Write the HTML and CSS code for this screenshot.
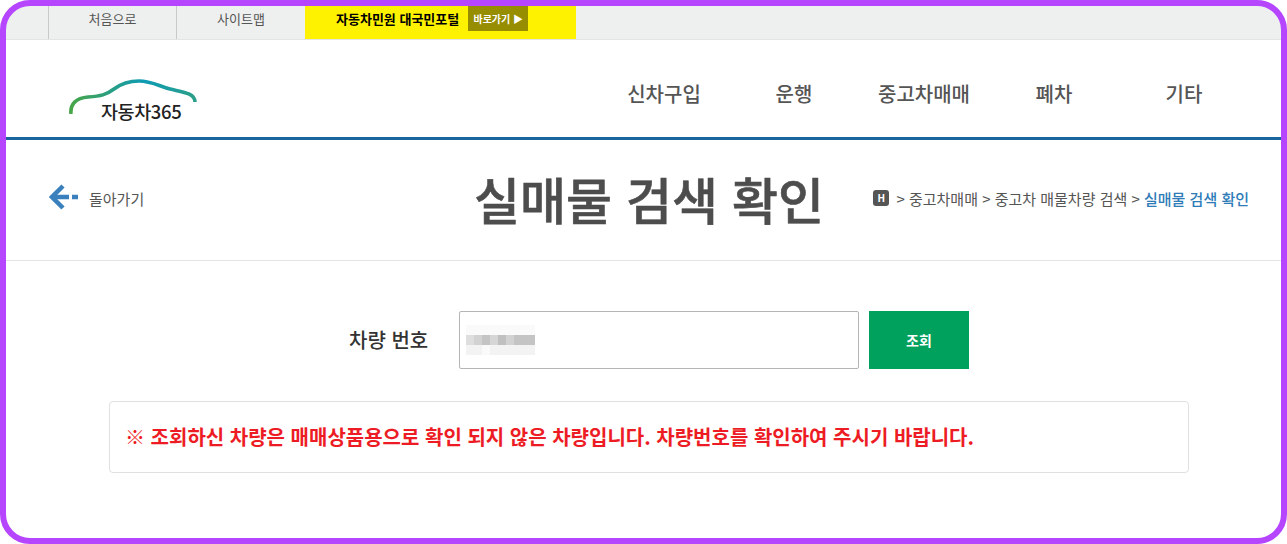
FILE: index.html
```html
<!DOCTYPE html>
<html lang="ko">
<head>
<meta charset="utf-8">
<title>실매물 검색 확인</title>
<link rel="stylesheet" href="styles.css">
</head>
<body>
<div class="page">
  <div class="topbar">
    <a class="top-item">처음으로</a>
    <a class="top-item">사이트맵</a>
    <a class="top-portal"><b>자동차민원 대국민포털</b><span class="go">바로가기 ▶</span></a>
  </div>
  <header class="header">
    <div class="logo">
      <svg class="logo-car" width="130" height="36" viewBox="0 0 130 36">
        <defs>
          <linearGradient id="car" x1="0" x2="1" y1="0" y2="0">
            <stop offset="0" stop-color="#46a548"/>
            <stop offset="0.3" stop-color="#2b9f80"/>
            <stop offset="0.6" stop-color="#0f9bb4"/>
            <stop offset="1" stop-color="#2a9f88"/>
          </linearGradient>
        </defs>
        <path d="M2 36C1 26 7 20 19 19C32 18 37 17 45 11C53 5 60 3 70 3C82 3 90 8 101 11C113 14 126 15 126 24" fill="none" stroke="url(#car)" stroke-width="3.6"/>
      </svg>
      <span class="logo-text">자동차365</span>
    </div>
    <nav class="nav">
      <a>신차구입</a><a>운행</a><a>중고차매매</a><a>폐차</a><a>기타</a>
    </nav>
  </header>
  <section class="title-row">
    <a class="back">
      <svg width="30" height="28" viewBox="0 0 30 28"><path d="M14 2L3 13L14 24" fill="none" stroke="#3a80bd" stroke-width="4.5"/><path d="M4 13H20M23 13H29" fill="none" stroke="#3a80bd" stroke-width="4.5"/></svg>
      <span>돌아가기</span>
    </a>
    <h1 class="title">실매물 검색 확인</h1>
    <div class="crumbs">
      <span class="home">H</span>
      <span>&gt; 중고차매매 &gt; 중고차 매물차량 검색 &gt; <em>실매물 검색 확인</em></span>
    </div>
  </section>
  <main class="main">
    <form class="search">
      <label class="search-label">차량 번호</label>
      <div class="search-input">
        <svg class="blur" width="72" height="30" viewBox="0 0 72 30" shape-rendering="crispEdges">
          <rect x="3" y="0" width="69" height="10" fill="#fafafa"/>
          <rect x="3" y="10" width="69" height="10" fill="#d2d2d2"/>
          <rect x="3" y="10" width="8" height="10" fill="#dedede"/>
          <rect x="19" y="10" width="8" height="10" fill="#c4c4c4"/>
          <rect x="27" y="10" width="8" height="10" fill="#d6d6d6"/>
          <rect x="35" y="10" width="8" height="10" fill="#c0c0c0"/>
          <rect x="51" y="10" width="21" height="10" fill="#c4c4c4"/>
          <rect x="3" y="20" width="69" height="10" fill="#f3f3f3"/>
          <rect x="19" y="20" width="8" height="10" fill="#fafafa"/>
        </svg>
      </div>
      <button class="search-btn" type="button">조회</button>
    </form>
    <div class="notice">※ 조회하신 차량은 매매상품용으로 확인 되지 않은 차량입니다. 차량번호를 확인하여 주시기 바랍니다.</div>
  </main>
  <div class="frame"></div>
</div>
</body>
</html>
```
FILE: styles.css
```css
* { box-sizing: border-box; }
html, body { margin: 0; padding: 0; background: #fff; }
body { font-family: "Noto Sans CJK KR", "Noto Sans", sans-serif; color: #444; overflow: hidden; }
.page { position: relative; width: 1287px; height: 544px; overflow: hidden; }
.frame { position: absolute; inset: 0; border: 6px solid #b545ff; border-radius: 30px; box-shadow: 0 0 0 30px #fff; pointer-events: none; }

.topbar { display: flex; height: 40px; padding-left: 48px; background: #eeefef; border-bottom: 1px solid #e4e4e4; }
.top-item { width: 128px; border-left: 1px solid #c9c9c9; padding-top: 10px; font-size: 13px; line-height: 18px; text-align: center; color: #555; }
.top-item + .top-item { width: 129px; }
.top-portal { display: flex; align-items: flex-start; width: 271px; padding: 6px 0 0 31px; background: #fff200; color: #000; }
.top-portal b { font-size: 13px; line-height: 26px; font-weight: 700; white-space: nowrap; }
.go { display: block; width: 60px; height: 25px; margin-left: 9px; background: #978d00; color: #fff; font-size: 10px; font-weight: 700; line-height: 25px; text-align: center; white-space: nowrap; }

.header { display: flex; justify-content: space-between; height: 100px; border-bottom: 3px solid #1a659e; padding-right: 38px; }
.logo { position: relative; width: 200px; margin-left: 69px; }
.logo-car { position: absolute; left: 0; top: 38px; }
.logo-text { position: absolute; left: 32px; top: 58px; font-size: 18.5px; line-height: 26px; font-weight: 500; color: #222; letter-spacing: -0.4px; white-space: nowrap; }
.nav { display: flex; }
.nav a { width: 130px; padding-top: 40px; font-size: 20px; line-height: 28px; font-weight: 500; text-align: center; color: #555; }

.title-row { display: grid; grid-template-columns: 1fr auto 1fr; align-items: center; height: 121px; padding: 0 38px 4px 49px; border-bottom: 1px solid #e4e4e4; }
.back { display: flex; align-items: center; gap: 10px; font-size: 15px; color: #555; }
.title { margin: 0; font-size: 50px; line-height: 60px; font-weight: 500; color: #4d4d4d; -webkit-text-stroke: 0.6px #4d4d4d; white-space: nowrap; }
.crumbs { display: flex; justify-content: flex-end; align-items: center; gap: 7px; font-size: 15px; color: #555; white-space: nowrap; }
.crumbs em { font-style: normal; font-weight: 500; color: #2d7cb8; }
.home { display: block; width: 16px; height: 16px; border-radius: 3px; background: #555; color: #fff; font-size: 10px; font-weight: 700; line-height: 16px; text-align: center; }

.main { display: flex; flex-direction: column; align-items: center; padding: 50px 0 0 11px; }
.search { display: flex; align-items: stretch; height: 58px; margin-left: 20px; }
.search-label { width: 110px; font-size: 20px; line-height: 58px; font-weight: 500; color: #333; }
.search-input { display: flex; align-items: center; width: 400px; padding-left: 3px; background: #fff; border: 1px solid #b5b5b5; border-radius: 2px; }
.blur { display: block; }
.search-btn { width: 100px; margin-left: 10px; border: 0; background: #00a15c; color: #fff; font: 700 14px "Noto Sans CJK KR", sans-serif; }
.notice { width: 1080px; height: 72px; margin-top: 32px; padding-left: 15px; border: 1px solid #e0e0e0; border-radius: 4px; font-size: 20px; line-height: 70px; font-weight: 700; color: #ed1c24; white-space: nowrap; }
```
